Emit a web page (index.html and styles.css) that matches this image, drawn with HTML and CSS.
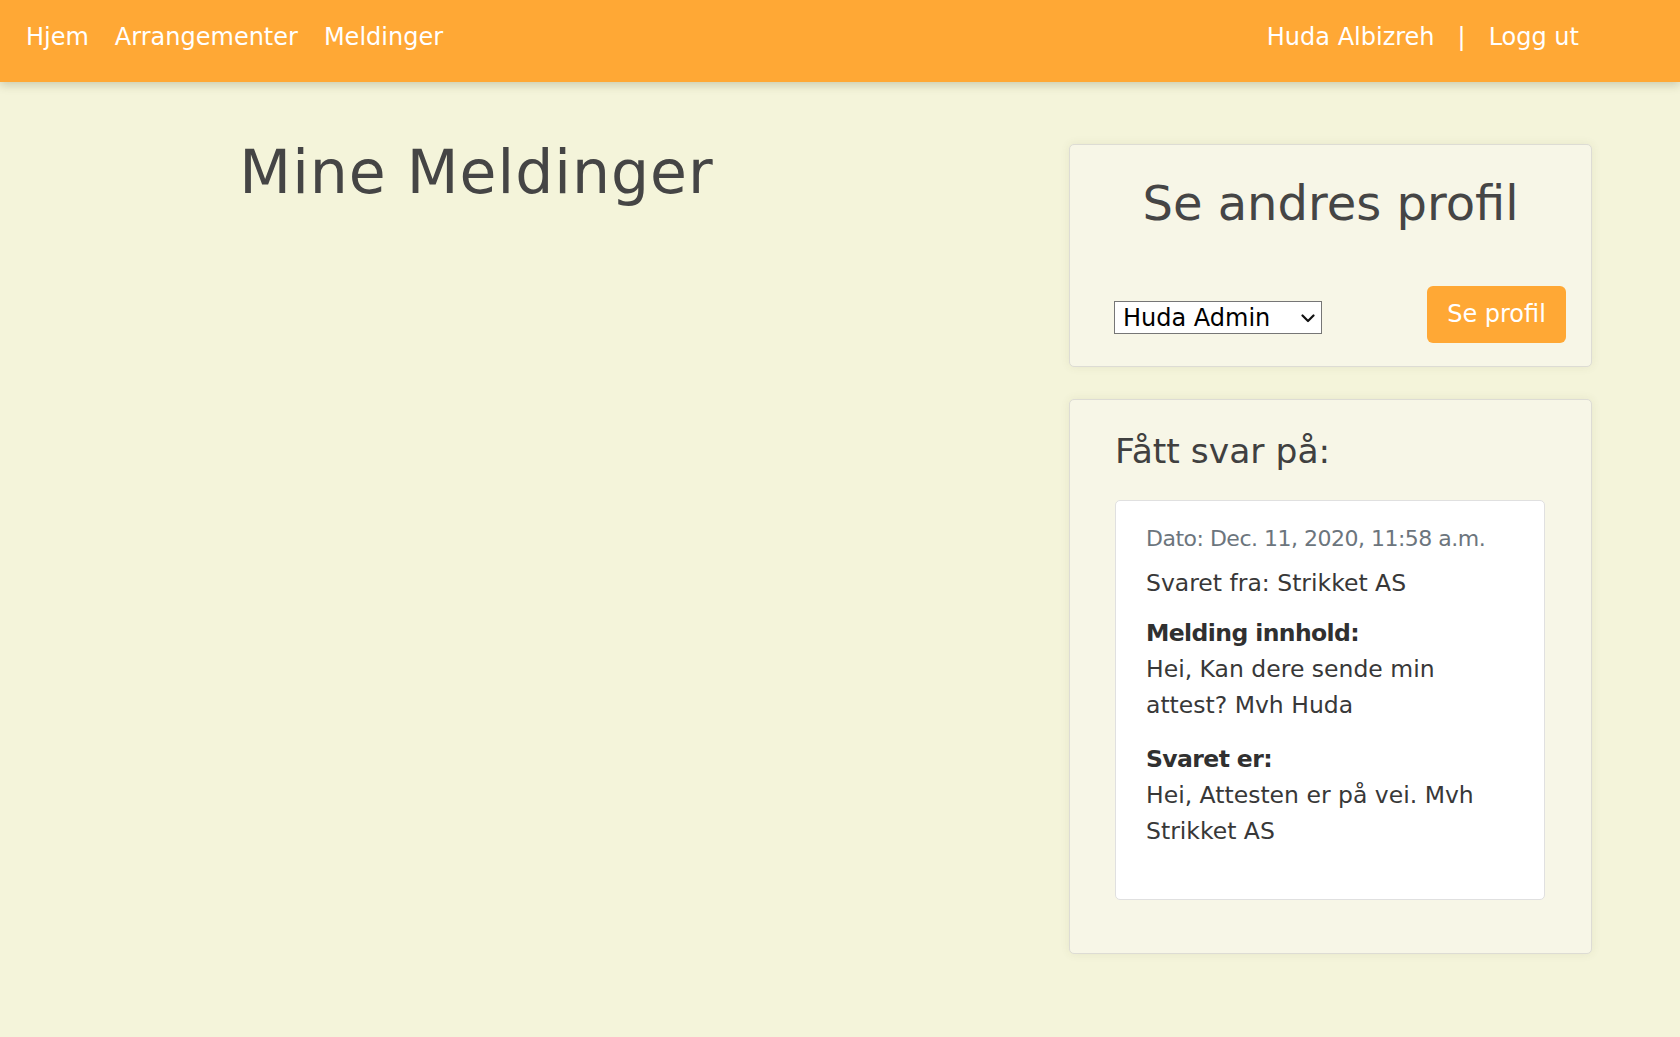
FILE: index.html
```html
<!DOCTYPE html>
<html lang="no">
<head>
<meta charset="utf-8">
<title>Mine Meldinger</title>
<link rel="stylesheet" href="styles.css">
</head>
<body>
<nav class="navbar">
  <div class="nav-left">
    <a class="nav-link" href="#">Hjem</a>
    <a class="nav-link" href="#">Arrangementer</a>
    <a class="nav-link" href="#">Meldinger</a>
  </div>
  <div class="nav-right">
    <a class="nav-link" href="#">Huda Albizreh</a>
    <span class="nav-sep">|</span>
    <a class="nav-link" href="#">Logg ut</a>
  </div>
</nav>
<main class="main">
  <section class="col-left">
    <h1 class="page-title">Mine Meldinger</h1>
  </section>
  <aside class="col-right">
    <div class="card card-profile">
      <h2 class="card-title-center">Se andres profil</h2>
      <form class="profile-form">
        <span class="select-wrap">
          <select class="user-select">
            <option>Huda Admin</option>
            <option>Strikket AS</option>
          </select>
          <svg class="select-chevron" width="14" height="9" viewBox="0 0 14 9" aria-hidden="true">
            <path d="M1.5 1.5 L7 7 L12.5 1.5" fill="none" stroke="#111" stroke-width="2.2" stroke-linecap="round" stroke-linejoin="round"/>
          </svg>
        </span>
        <button type="button" class="btn-orange">Se profil</button>
      </form>
    </div>
    <div class="card card-answers">
      <h3 class="card-title">Fått svar på:</h3>
      <div class="msg-card">
        <p class="msg-date">Dato: Dec. 11, 2020, 11:58 a.m.</p>
        <p class="msg-from">Svaret fra: Strikket AS</p>
        <div class="msg-block">
          <strong class="msg-label">Melding innhold:</strong>
          <p class="msg-text">Hei, Kan dere sende min attest? Mvh Huda</p>
        </div>
        <div class="msg-block">
          <strong class="msg-label">Svaret er:</strong>
          <p class="msg-text">Hei, Attesten er på vei. Mvh Strikket AS</p>
        </div>
      </div>
    </div>
  </aside>
</main>
</body>
</html>
```

FILE: styles.css
```css
* { box-sizing: border-box; }

html, body {
  margin: 0;
  padding: 0;
}

body {
  background: #f4f4da;
  font-family: "DejaVu Sans", "Liberation Sans", sans-serif;
  color: #444;
  min-height: 1037px;
}

.navbar {
  height: 82px;
  background: #ffa835;
  box-shadow: 0 3px 9px rgba(60, 60, 20, 0.22);
  display: flex;
  align-items: flex-start;
  padding: 25px 101px 0 26px;
  font-size: 24px;
  line-height: 24px;
  position: relative;
  z-index: 1;
}

.nav-left {
  display: flex;
  gap: 26px;
}

.nav-right {
  margin-left: auto;
  display: flex;
}

.nav-link {
  color: #fff;
  text-decoration: none;
}

.nav-sep {
  color: #fff;
  margin: 0 23px 0 23px;
}

.main {
  display: flex;
  align-items: flex-start;
}

.col-left {
  width: 953px;
  text-align: center;
  padding-top: 54px;
}

.page-title {
  margin: 0;
  font-size: 60px;
  line-height: 72px;
  letter-spacing: 1px;
  font-weight: normal;
  color: #454545;
}

.col-right {
  width: 523px;
  margin-left: 116px;
  padding-top: 62px;
  display: flex;
  flex-direction: column;
  gap: 32px;
}

.card {
  background: #f7f6e7;
  border: 1px solid #dddcd4;
  border-radius: 5px;
  box-shadow: 0 0 10px rgba(90, 90, 40, 0.09);
}

.card-profile {
  padding: 30px 25px 23px 44px;
}

.card-title-center {
  margin: 0 0 0 -19px;
  font-size: 48px;
  line-height: 57.6px;
  font-weight: normal;
  text-align: center;
  color: #454545;
}

.profile-form {
  margin: 53px 0 0;
  display: flex;
  justify-content: space-between;
  align-items: flex-end;
}

.select-wrap {
  position: relative;
  display: block;
  width: 208px;
  height: 33px;
  margin-bottom: 9px;
}

.user-select {
  -webkit-appearance: none;
  appearance: none;
  display: block;
  width: 208px;
  height: 33px;
  font-family: "DejaVu Sans", "Liberation Sans", sans-serif;
  font-size: 24px;
  line-height: 29px;
  color: #000;
  background: #fff;
  border: 1px solid #767676;
  border-radius: 0;
  margin: 0;
  padding: 2px 30px 0 8px;
}

.select-chevron {
  position: absolute;
  right: 7px;
  top: 13px;
  pointer-events: none;
}

.btn-orange {
  width: 139px;
  height: 57px;
  background: #ffa835;
  border: none;
  border-radius: 6px;
  color: #fff;
  font-family: "DejaVu Sans", "Liberation Sans", sans-serif;
  font-size: 24px;
  padding: 0;
}

.card-answers {
  padding: 31px 46px 53px 45px;
}

.card-title {
  margin: 0 0 28px;
  font-size: 34.5px;
  line-height: 41.4px;
  font-weight: normal;
  color: #404040;
}

.msg-card {
  background: #fff;
  border: 1px solid #e0e0e0;
  border-radius: 5px;
  padding: 20px 30px 50px 30px;
  font-size: 23.5px;
  line-height: 36px;
  color: #383838;
}

.msg-date {
  margin: 0 0 8px;
  font-size: 22px;
  letter-spacing: -0.5px;
  white-space: nowrap;
  color: #6c757d;
}

.msg-from {
  margin: 0 0 14px;
}

.msg-block + .msg-block {
  margin-top: 18px;
}

.msg-label {
  display: block;
  font-weight: bold;
  letter-spacing: -0.6px;
  color: #303030;
}

.msg-text {
  margin: 0;
}
```
